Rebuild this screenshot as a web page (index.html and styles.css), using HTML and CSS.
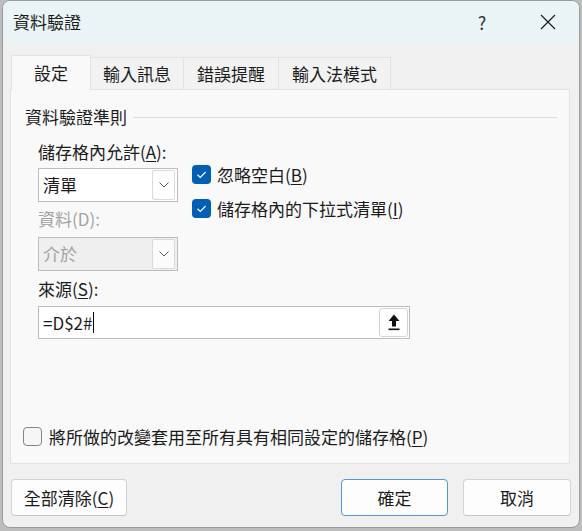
FILE: index.html
```html
<!DOCTYPE html>
<html lang="zh-Hant">
<head>
<meta charset="utf-8">
<title>資料驗證</title>
<link rel="stylesheet" href="styles.css">
</head>
<body>
<div class="window">
  <div class="titlebar">
    <span class="title">資料驗證</span>
    <span class="help">?</span>
    <span class="close"><svg width="16" height="16" viewBox="0 0 16 16"><path d="M1 1 L15 15 M15 1 L1 15" stroke="#1b1b1b" stroke-width="1.2" fill="none"/></svg></span>
  </div>
  <div class="tabs">
    <div class="tab active">設定</div>
    <div class="tab t2">輸入訊息</div>
    <div class="tab t3">錯誤提醒</div>
    <div class="tab t4">輸入法模式</div>
  </div>
  <div class="panel">
    <div class="group-head"><span>資料驗證準則</span><span class="rule"></span></div>
    <div class="rules">
      <div class="label">儲存格內允許(<u>A</u>):</div>
      <div class="select first">
        <span>清單</span>
        <span class="drop"><svg width="10" height="6" viewBox="0 0 10 6"><polyline points="0.5,0.5 5,5 9.5,0.5" stroke="#5c5c5c" stroke-width="1" fill="none"/></svg></span>
      </div>
      <div class="checks">
        <div class="check"><span class="box on"><svg width="19" height="19" viewBox="0 0 19 19"><polyline points="5.5,9.8 8.3,12.5 13.6,7" stroke="#fff" stroke-width="1.2" fill="none"/></svg></span>忽略空白(<u>B</u>)</div>
        <div class="check"><span class="box on"><svg width="19" height="19" viewBox="0 0 19 19"><polyline points="5.5,9.8 8.3,12.5 13.6,7" stroke="#fff" stroke-width="1.2" fill="none"/></svg></span>儲存格內的下拉式清單(<u>I</u>)</div>
      </div>
      <div class="label dim second-label">資料(D):</div>
      <div class="select disabled">
        <span>介於</span>
        <span class="drop"><svg width="10" height="6" viewBox="0 0 10 6"><polyline points="0.5,0.5 5,5 9.5,0.5" stroke="#5c5c5c" stroke-width="1" fill="none"/></svg></span>
      </div>
    </div>
    <div class="label src">來源(<u>S</u>):</div>
    <div class="input">
      <span class="value">=D$2#</span><span class="caret"></span>
      <span class="ref-btn"><svg width="12" height="17" viewBox="0 0 12 17"><polygon points="6,0.5 11.5,7 8,7 8,12.5 4,12.5 4,7 0.5,7" fill="#111"/><rect x="0.5" y="14.5" width="11" height="1.6" fill="#111"/></svg></span>
    </div>
    <div class="check apply"><span class="box"></span>將所做的改變套用至所有具有相同設定的儲存格(<u>P</u>)</div>
  </div>
  <div class="footer">
    <button class="btn clear">全部清除(<u>C</u>)</button>
    <button class="btn ok">確定</button>
    <button class="btn cancel">取消</button>
  </div>
</div>
</body>
</html>
```

FILE: styles.css
```css
html, body {
  margin: 0;
  padding: 0;
}
body {
  background: #bdbdbd;
  width: 582px;
  height: 531px;
  overflow: hidden;
  font-family: "Noto Sans CJK TC", "Noto Sans", sans-serif;
  font-size: 17px;
  color: #1b1b1b;
}
u {
  text-decoration: underline;
  text-underline-offset: 2px;
  text-decoration-thickness: 1px;
}
.window {
  margin-left: 2px;
  width: 578px;
  height: 528px;
  box-sizing: border-box;
  border: 1px solid #9a9a9a;
  border-radius: 8px;
  background: #f0f0f0;
  overflow: hidden;
  display: flex;
  flex-direction: column;
}
.titlebar {
  height: 42px;
  flex: none;
  background: #eaf4f6;
  display: flex;
  align-items: center;
  padding-left: 10px;
  line-height: 20px;
}
.help {
  margin-left: auto;
  margin-right: 16px;
  width: 40px;
  text-align: center;
  font-size: 18px;
  color: #333;
}
.close {
  width: 60px;
  margin-right: 1px;
  display: flex;
  justify-content: center;
  align-items: center;
}
.tabs {
  margin-top: 12px;
  height: 34px;
  padding-left: 8px;
  display: flex;
  align-items: flex-end;
  flex: none;
}
.tab {
  box-sizing: border-box;
  height: 32px;
  border: 1px solid #e2e2e2;
  border-bottom: none;
  background: #f2f2f2;
  display: flex;
  align-items: center;
  justify-content: center;
  line-height: 20px;
  margin-left: -1px;
}
.tab.active {
  height: 35px;
  width: 80px;
  margin-left: 0;
  margin-bottom: -1px;
  background: #f9f9f9;
  position: relative;
  z-index: 1;
}
.t2 { width: 94px; }
.t3 { width: 96px; }
.t4 { width: 113px; }
.panel {
  margin-left: 7px;
  width: 560px;
  height: 375px;
  box-sizing: border-box;
  border: 1px solid #e2e2e2;
  background: #f9f9f9;
  flex: none;
}
.group-head {
  margin-top: 17px;
  height: 20px;
  padding-left: 14px;
  margin-right: 12px;
  display: flex;
  align-items: center;
  line-height: 20px;
}
.rule {
  flex: 1;
  height: 1px;
  background: #dcdcdc;
  margin-left: 6px;
}
.rules {
  margin-top: 15px;
  padding-left: 27px;
  display: grid;
  grid-template-columns: 140px 1fr;
  column-gap: 14px;
  align-items: start;
}
.label {
  height: 20px;
  line-height: 20px;
  white-space: nowrap;
}
.dim { color: #a2a2a2; }
.second-label { margin-top: 7px; }
.select {
  grid-column: 1;
  margin-top: 6px;
  height: 34px;
  box-sizing: border-box;
  border: 1px solid #bcbcbc;
  background: #fff;
  display: flex;
  align-items: center;
  padding-left: 4px;
  line-height: 20px;
}
.select.disabled {
  margin-top: 8px;
  background: #efefef;
  color: #a2a2a2;
}
.drop {
  margin-left: auto;
  margin-right: 2px;
  width: 23px;
  height: 30px;
  box-sizing: border-box;
  border: 1px solid #dadada;
  border-radius: 2px;
  background: #fff;
  display: flex;
  align-items: center;
  justify-content: center;
}
.select.disabled .drop { background: #fbfbfb; }
.checks {
  grid-column: 2;
  grid-row: 2 / span 3;
  padding-top: 3px;
  display: flex;
  flex-direction: column;
  gap: 15px;
}
.check {
  display: flex;
  align-items: center;
  height: 19px;
  line-height: 20px;
  white-space: nowrap;
}
.box {
  width: 19px;
  height: 19px;
  box-sizing: border-box;
  border: 1px solid #858585;
  border-radius: 4px;
  background: #f6f6f6;
  margin-right: 6px;
  flex: none;
}
.box.on {
  border: none;
  background: #005fb8;
}
.box svg { display: block; }
.src {
  margin-top: 8px;
  margin-left: 27px;
}
.input {
  margin-top: 7px;
  margin-left: 27px;
  width: 372px;
  height: 33px;
  box-sizing: border-box;
  border: 1px solid #bcbcbc;
  background: #fff;
  display: flex;
  align-items: center;
  padding-left: 4px;
  line-height: 20px;
}
.caret {
  width: 1px;
  height: 21px;
  background: #000;
  margin-left: 1px;
}
.ref-btn {
  margin-left: auto;
  margin-right: 1px;
  width: 29px;
  height: 29px;
  box-sizing: border-box;
  border: 1px solid #d4d4d4;
  border-radius: 3px;
  background: #fff;
  display: flex;
  align-items: center;
  justify-content: center;
}
.apply {
  margin-top: 88px;
  margin-left: 12px;
}
.apply .box { margin-right: 7px; }
.footer {
  margin-top: 15px;
  padding-left: 8px;
  padding-right: 8px;
  display: flex;
  flex: none;
}
.btn {
  height: 37px;
  box-sizing: border-box;
  border: 1px solid #d3d3d3;
  border-bottom-color: #c4c4c4;
  border-radius: 4px;
  background: #fdfdfd;
  font-family: inherit;
  font-size: 17px;
  color: #1b1b1b;
  line-height: 20px;
  padding: 0;
}
.clear { width: 116px; }
.ok {
  width: 107px;
  margin-left: auto;
  border-color: #5197dd;
}
.cancel {
  width: 108px;
  margin-left: 15px;
}
```
